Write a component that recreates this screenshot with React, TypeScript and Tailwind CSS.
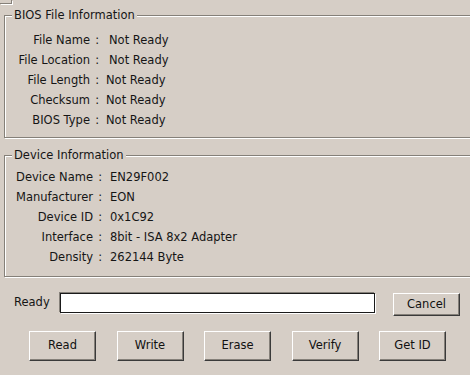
import React from "react";

const font = { fontFamily: '"DejaVu Sans", Tahoma, sans-serif' };

function Btn({ label, cls }: { label: string; cls: string }) {
  return (
    <div
      className={`flex items-center justify-center border border-t-white border-l-white border-b-[#3a3a3a] border-r-[#3a3a3a] shadow-[inset_-1px_-1px_0_#858079] bg-[#d6cec6] text-[#111] ${cls}`}
    >
      {label}
    </div>
  );
}

export default function App() {
  const bios = [
    { l: "File Name", v: "Not Ready", vm: "pl-[10px]" },
    { l: "File Location", v: "Not Ready", vm: "pl-[10px]" },
    { l: "File Length", v: "Not Ready", vm: "pl-[7px]" },
    { l: "Checksum", v: "Not Ready", vm: "pl-[7px]" },
    { l: "BIOS Type", v: "Not Ready", vm: "pl-[7px]" },
  ];
  const dev = [
    { l: "Device Name", v: "EN29F002" },
    { l: "Manufacturer", v: "EON" },
    { l: "Device ID", v: "0x1C92" },
    { l: "Interface", v: "8bit - ISA 8x2 Adapter" },
    { l: "Density", v: "262144 Byte" },
  ];
  return (
    <div
      className="relative w-[470px] h-[375px] overflow-hidden bg-[#d6cec6] text-[11.5px] text-[#151515] flex flex-col"
      style={font}
    >
      <div className="absolute left-0 top-0 w-[12px] h-[4px] border-b border-r border-[#858079] shadow-[1px_1px_0_#ffffff]" />

      {/* BIOS File Information */}
      <div className="relative mt-[15px] ml-[4px] w-[490px] h-[123px] border border-[#858079] shadow-[inset_1px_1px_0_#ffffff,1px_1px_0_#ffffff] pt-[14px] shrink-0">
        <div className="absolute left-[7px] top-[-9px] px-[2px] bg-[#d6cec6] leading-[16px]">
          BIOS File Information
        </div>
        {bios.map((r) => (
          <div key={r.l} className="flex h-[20px] items-center leading-[20px]">
            <div className="w-[85px] text-right">{r.l}</div>
            <div className="w-[9px] text-right">:</div>
            <div className={r.vm}>{r.v}</div>
          </div>
        ))}
      </div>

      {/* Device Information */}
      <div className="relative mt-[17px] ml-[4px] w-[490px] h-[122px] border border-[#858079] shadow-[inset_1px_1px_0_#ffffff,1px_1px_0_#ffffff] pt-[11px] shrink-0">
        <div className="absolute left-[7px] top-[-9px] px-[2px] bg-[#d6cec6] leading-[16px]">
          Device Information
        </div>
        {dev.map((r) => (
          <div key={r.l} className="flex h-[20px] items-center leading-[20px]">
            <div className="w-[88px] text-right">{r.l}</div>
            <div className="w-[9px] text-right">:</div>
            <div className="pl-[8px]">{r.v}</div>
          </div>
        ))}
      </div>

      {/* Status row */}
      <div className="flex items-start mt-[16px] shrink-0">
        <div className="ml-[14px] w-[46px] h-[20px] leading-[18px]">Ready</div>
        <div className="w-[315px] h-[20px] bg-white border border-[#1a1a1a] shadow-[-1px_-1px_0_#858079,1px_1px_0_#ffffff]" />
        <Btn label="Cancel" cls="ml-[18px] w-[67px] h-[23px]" />
      </div>

      {/* Buttons */}
      <div className="flex mt-[15px] pl-[29px] gap-[20.5px] shrink-0">
        <Btn label="Read" cls="w-[67px] h-[30px]" />
        <Btn label="Write" cls="w-[67px] h-[30px]" />
        <Btn label="Erase" cls="w-[67px] h-[30px]" />
        <Btn label="Verify" cls="w-[67px] h-[30px]" />
        <Btn label="Get ID" cls="w-[67px] h-[30px]" />
      </div>
    </div>
  );
}
